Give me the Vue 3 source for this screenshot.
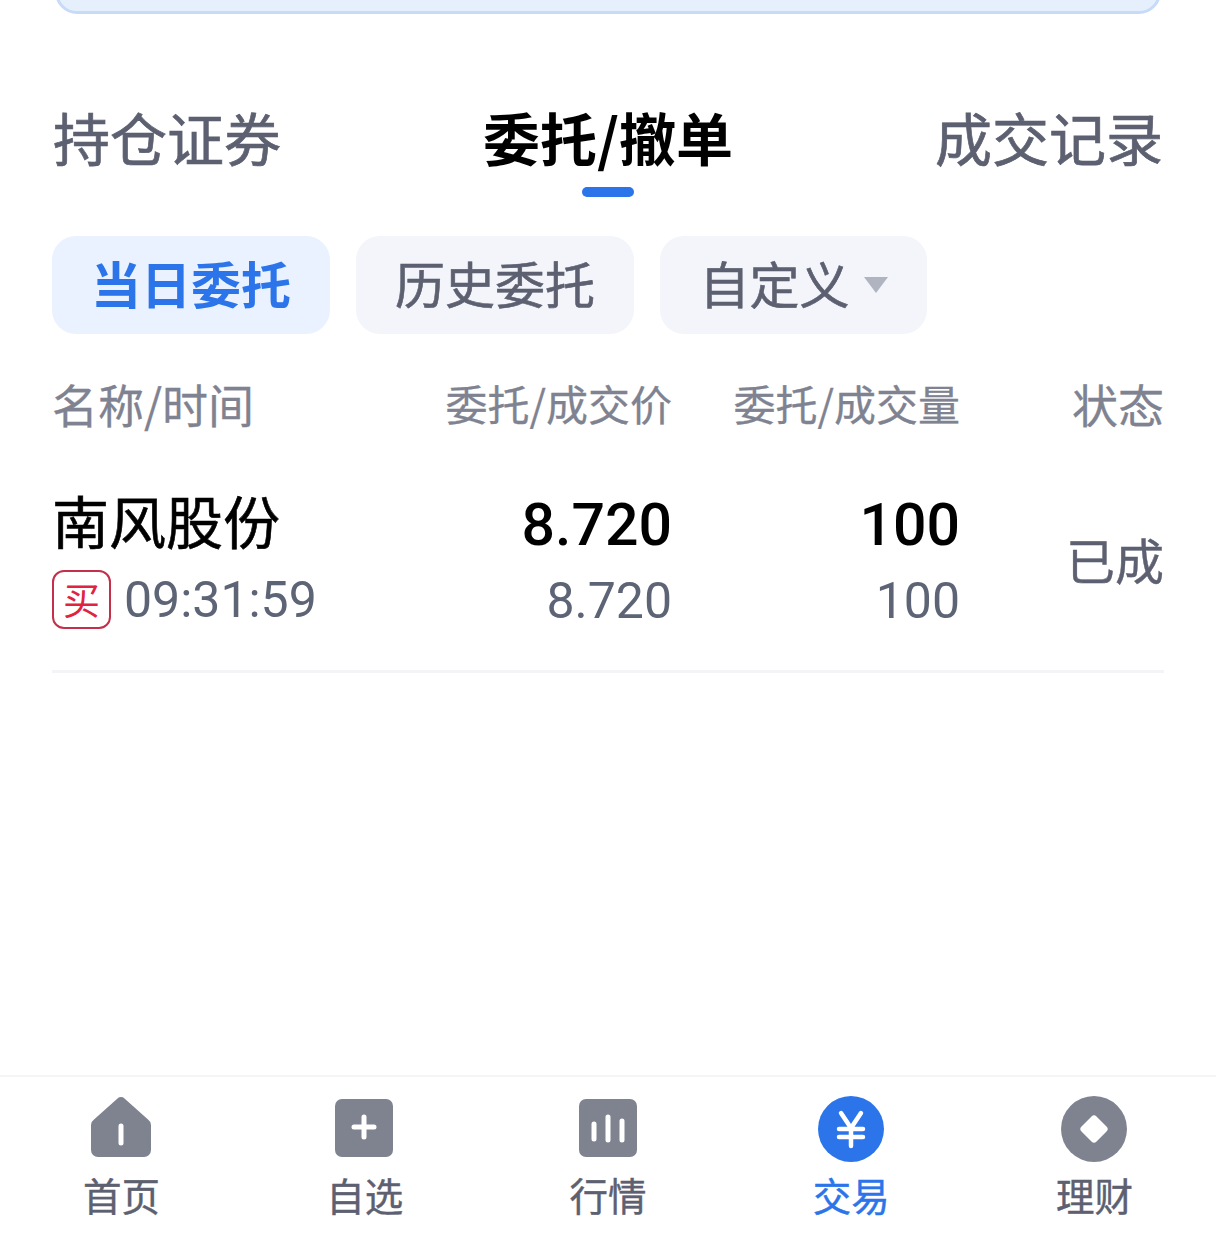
<template>
  <div class="page">
    <div class="top-card"></div>

    <div class="tabs">
      <span
        v-for="tab in tabs"
        :key="tab"
        :class="['tab', { 'tab--active': tab === activeTab }]"
      >{{ tab }}</span>
    </div>

    <div class="chips">
      <span class="chip chip--active"><span class="chip-text">当日委托</span></span>
      <span class="chip"><span class="chip-text">历史委托</span></span>
      <span class="chip chip--menu">
        <span class="chip-text">自定义</span>
        <i class="caret"></i>
      </span>
    </div>

    <div class="table">
      <div class="table-head">
        <span class="head-name">名称/时间</span>
        <span class="head-num">委托/成交价</span>
        <span class="head-num">委托/成交量</span>
        <span class="head-state">状态</span>
      </div>

      <div v-for="row in orders" :key="row.name + row.time" class="table-row">
        <div class="cell-name">
          <div class="stock-name">{{ row.name }}</div>
          <div class="stock-meta">
            <span class="side-badge">{{ row.side }}</span>
            <span class="stock-time">{{ row.time }}</span>
          </div>
        </div>
        <div class="cell-num">
          <div class="num-main">{{ row.price }}</div>
          <div class="num-sub">{{ row.dealPrice }}</div>
        </div>
        <div class="cell-num">
          <div class="num-main">{{ row.amount }}</div>
          <div class="num-sub">{{ row.dealAmount }}</div>
        </div>
        <div class="cell-state">{{ row.state }}</div>
      </div>
    </div>

    <nav class="bottom-nav">
      <a class="nav-item">
        <svg class="nav-icon" viewBox="0 0 66 66">
          <path d="M28.5 2.5a5 5 0 0 1 7 0L59 23.5a7 7 0 0 1 3 5.5V54a7 7 0 0 1-7 7H9a7 7 0 0 1-7-7V29a7 7 0 0 1 3-5.5z" fill="#7f8390" />
          <path d="M32 30v17" stroke="#fff" stroke-width="5" stroke-linecap="round" />
        </svg>
        <span>首页</span>
      </a>
      <a class="nav-item">
        <svg class="nav-icon" viewBox="0 0 66 66">
          <rect x="3" y="3" width="58" height="58" rx="7" fill="#7f8390" />
          <path d="M32 21v20M22 31h20" stroke="#fff" stroke-width="5" stroke-linecap="round" />
        </svg>
        <span>自选</span>
      </a>
      <a class="nav-item">
        <svg class="nav-icon" viewBox="0 0 66 66">
          <rect x="4" y="3" width="58" height="58" rx="7" fill="#7f8390" />
          <path d="M19 28v15M33 21v23M47 25v19" stroke="#fff" stroke-width="5" stroke-linecap="round" />
        </svg>
        <span>行情</span>
      </a>
      <a class="nav-item nav-item--active">
        <svg class="nav-icon" viewBox="0 0 66 66">
          <circle cx="33" cy="33" r="33" fill="#2b74ea" />
          <path d="M23 17l10 15 10-15M33 32v18M21 33h24M21 41h24" fill="none" stroke="#fff" stroke-width="4.5" stroke-linecap="round" stroke-linejoin="round" />
        </svg>
        <span>交易</span>
      </a>
      <a class="nav-item">
        <svg class="nav-icon" viewBox="0 0 66 66">
          <circle cx="33" cy="33" r="33" fill="#7f8390" />
          <path d="M30.5 20.5a3.5 3.5 0 0 1 5 0l10 10a3.5 3.5 0 0 1 0 5l-10 10a3.5 3.5 0 0 1-5 0l-10-10a3.5 3.5 0 0 1 0-5z" fill="#fff" />
        </svg>
        <span>理财</span>
      </a>
    </nav>
  </div>
</template>

<script setup>
const tabs = ['持仓证券', '委托/撤单', '成交记录']
const activeTab = '委托/撤单'

const orders = [
  {
    name: '南风股份',
    side: '买',
    time: '09:31:59',
    price: '8.720',
    dealPrice: '8.720',
    amount: '100',
    dealAmount: '100',
    state: '已成',
  },
]
</script>

<style>
html,
body {
  margin: 0;
  background: #fff;
}
</style>

<style scoped>
.page {
  display: flex;
  flex-direction: column;
  height: 1236px;
  overflow: hidden;
  background: #fff;
  font-family: "Noto Sans CJK SC", "Noto Sans", sans-serif;
  color: #5c6070;
}

.top-card {
  flex: none;
  height: 44px;
  margin: -30px 55px 0;
  border: 3px solid #c7dbf8;
  border-radius: 30px;
  background: #e6f0fd;
  box-sizing: border-box;
}

.tabs {
  display: flex;
  justify-content: space-between;
  margin-top: 79px;
  padding: 0 53px;
}

.tab {
  position: relative;
  height: 86px;
  font-size: 57px;
  line-height: 86px;
  -webkit-text-stroke: 0.7px currentColor;
  color: #5c6070;
  white-space: nowrap;
}

.tab--active {
  font-weight: 700;
  -webkit-text-stroke: 0;
  color: #000;
}

.tab--active::after {
  content: "";
  position: absolute;
  left: 50%;
  bottom: -18px;
  width: 52px;
  height: 10px;
  margin-left: -26px;
  border-radius: 5px;
  background: #2b74ea;
}

.chips {
  display: flex;
  gap: 26px;
  margin-top: 57px;
  padding: 0 52px;
}

.chip {
  display: flex;
  align-items: center;
  justify-content: center;
  width: 278px;
  height: 98px;
  border-radius: 24px;
  background: #f3f5fa;
  font-size: 50px;
  -webkit-text-stroke: 0.6px currentColor;
  color: #5c6070;
}

.chip-text {
  margin-top: -6px;
}

.chip--active {
  background: #e9f2fe;
  color: #2b74ea;
  font-weight: 700;
  -webkit-text-stroke: 0;
}

.chip--menu {
  width: 267px;
  gap: 14px;
}

.caret {
  width: 0;
  height: 0;
  border-left: 12px solid transparent;
  border-right: 12px solid transparent;
  border-top: 16px solid #b0b4c1;
}

.table {
  padding: 0 52px;
}

.table-head,
.table-row {
  display: grid;
  grid-template-columns: 332px 288px 288px 204px;
}

.table-head {
  align-items: center;
  height: 72px;
  margin-top: 33px;
  padding-bottom: 1px;
  color: #7f8391;
  -webkit-text-stroke: 0.3px currentColor;
}

.head-name,
.head-state {
  font-size: 46px;
  line-height: 72px;
}

.head-num {
  font-size: 42px;
  line-height: 72px;
  text-align: right;
  white-space: nowrap;
}

.head-state {
  text-align: right;
}

.table-row {
  align-items: center;
  height: 233px;
  padding-top: 7px;
  border-bottom: 3px solid #f3f4f7;
  box-sizing: border-box;
}

.cell-name {
  margin-bottom: 7px;
}

.stock-name {
  font-size: 57px;
  line-height: 76px;
  -webkit-text-stroke: 0.6px currentColor;
  color: #000;
}

.stock-meta {
  display: flex;
  align-items: center;
  gap: 13px;
  margin-top: 12px;
}

.side-badge {
  display: flex;
  align-items: center;
  justify-content: center;
  width: 59px;
  height: 59px;
  border: 2px solid #c4304a;
  border-radius: 12px;
  box-sizing: border-box;
  font-size: 37px;
  color: #e0233f;
}

.stock-time {
  position: relative;
  top: 1px;
  font-family: Roboto, sans-serif;
  font-size: 50px;
  line-height: 60px;
  color: #5d6475;
}

.cell-num {
  text-align: right;
}

.num-main {
  font-family: Roboto, sans-serif;
  font-size: 59px;
  font-weight: 500;
  line-height: 76px;
  color: #000;
}

.num-sub {
  margin-top: 8px;
  font-family: Roboto, sans-serif;
  font-size: 50px;
  line-height: 60px;
  color: #5d6475;
}

.cell-state {
  font-size: 49px;
  text-align: right;
  -webkit-text-stroke: 0.4px currentColor;
  color: #5c6070;
}

.bottom-nav {
  display: flex;
  flex: none;
  height: 161px;
  margin-top: auto;
  border-top: 2px solid #f5f5f5;
  box-sizing: border-box;
}

.nav-item {
  display: flex;
  flex: 1;
  flex-direction: column;
  align-items: center;
  padding-top: 19px;
  font-size: 38.5px;
  line-height: 50px;
  -webkit-text-stroke: 0.4px currentColor;
  color: #5c6070;
}

.nav-item--active {
  color: #2b74ea;
}

.nav-icon {
  width: 66px;
  height: 66px;
  margin-bottom: 7px;
}
</style>
